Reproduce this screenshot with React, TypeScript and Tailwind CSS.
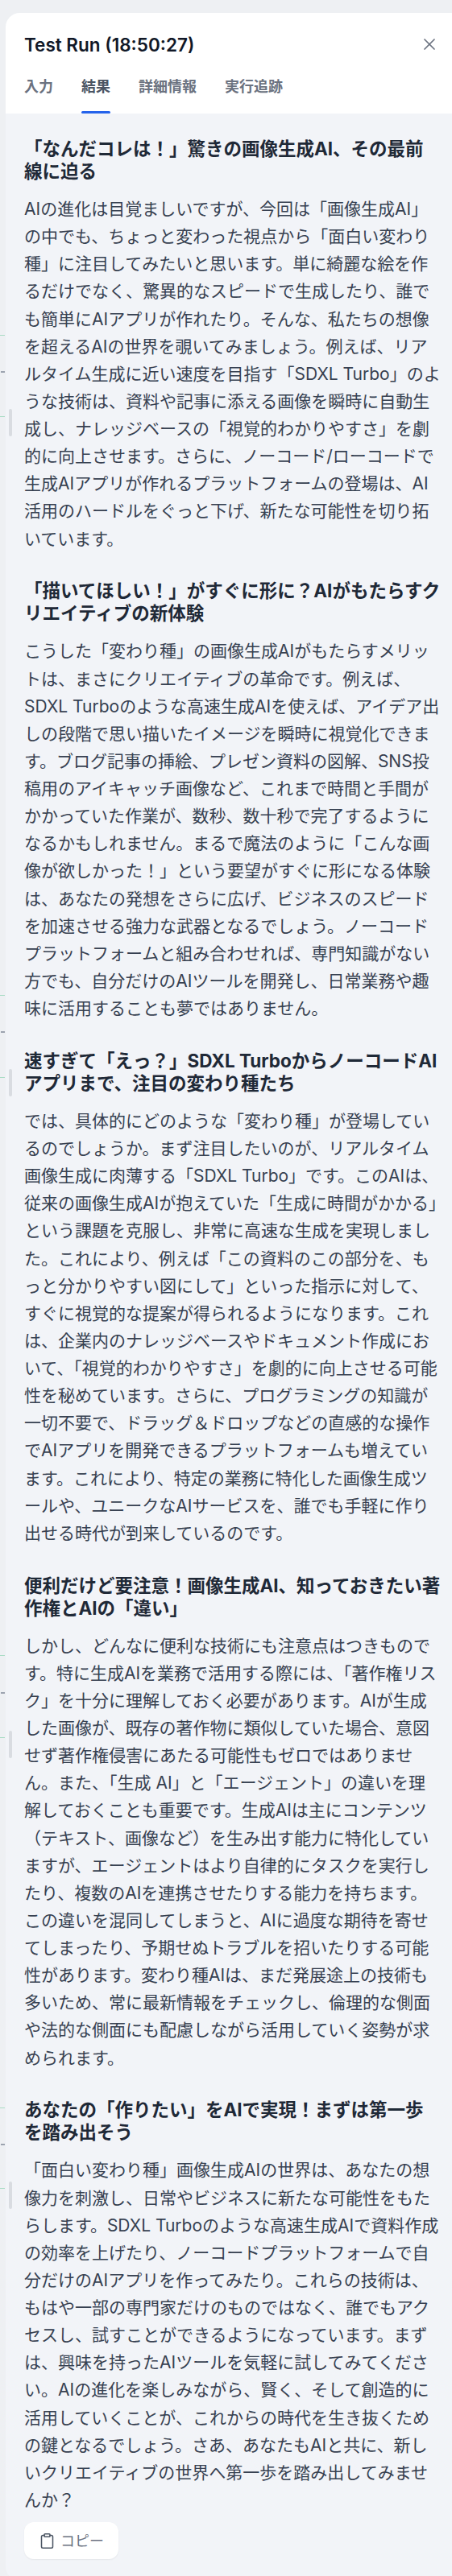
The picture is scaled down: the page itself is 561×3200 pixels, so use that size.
import { Clipboard, X } from 'lucide-react';

const sections = [
  {
    title: ['「なんだコレは！」驚きの画像生成AI、その最前', '線に迫る'],
    lines: [
      'AIの進化は目覚ましいですが、今回は「画像生成AI」',
      'の中でも、ちょっと変わった視点から「面白い変わり',
      '種」に注目してみたいと思います。単に綺麗な絵を作',
      'るだけでなく、驚異的なスピードで生成したり、誰で',
      'も簡単にAIアプリが作れたり。そんな、私たちの想像',
      'を超えるAIの世界を覗いてみましょう。例えば、リア',
      'ルタイム生成に近い速度を目指す「SDXL Turbo」のよ',
      'うな技術は、資料や記事に添える画像を瞬時に自動生',
      '成し、ナレッジベースの「視覚的わかりやすさ」を劇',
      '的に向上させます。さらに、ノーコード/ローコードで',
      '生成AIアプリが作れるプラットフォームの登場は、AI',
      '活用のハードルをぐっと下げ、新たな可能性を切り拓',
      'いています。',
    ],
  },
  {
    title: ['「描いてほしい！」がすぐに形に？AIがもたらすク', 'リエイティブの新体験'],
    lines: [
      'こうした「変わり種」の画像生成AIがもたらすメリッ',
      'トは、まさにクリエイティブの革命です。例えば、',
      'SDXL Turboのような高速生成AIを使えば、アイデア出',
      'しの段階で思い描いたイメージを瞬時に視覚化できま',
      'す。ブログ記事の挿絵、プレゼン資料の図解、SNS投',
      '稿用のアイキャッチ画像など、これまで時間と手間が',
      'かかっていた作業が、数秒、数十秒で完了するように',
      'なるかもしれません。まるで魔法のように「こんな画',
      '像が欲しかった！」という要望がすぐに形になる体験',
      'は、あなたの発想をさらに広げ、ビジネスのスピード',
      'を加速させる強力な武器となるでしょう。ノーコード',
      'プラットフォームと組み合わせれば、専門知識がない',
      '方でも、自分だけのAIツールを開発し、日常業務や趣',
      '味に活用することも夢ではありません。',
    ],
  },
  {
    title: ['速すぎて「えっ？」SDXL TurboからノーコードAI', 'アプリまで、注目の変わり種たち'],
    lines: [
      'では、具体的にどのような「変わり種」が登場してい',
      'るのでしょうか。まず注目したいのが、リアルタイム',
      '画像生成に肉薄する「SDXL Turbo」です。このAIは、',
      '従来の画像生成AIが抱えていた「生成に時間がかかる」',
      'という課題を克服し、非常に高速な生成を実現しまし',
      'た。これにより、例えば「この資料のこの部分を、も',
      'っと分かりやすい図にして」といった指示に対して、',
      'すぐに視覚的な提案が得られるようになります。これ',
      'は、企業内のナレッジベースやドキュメント作成にお',
      'いて、「視覚的わかりやすさ」を劇的に向上させる可能',
      '性を秘めています。さらに、プログラミングの知識が',
      '一切不要で、ドラッグ＆ドロップなどの直感的な操作',
      'でAIアプリを開発できるプラットフォームも増えてい',
      'ます。これにより、特定の業務に特化した画像生成ツ',
      'ールや、ユニークなAIサービスを、誰でも手軽に作り',
      '出せる時代が到来しているのです。',
    ],
  },
  {
    title: ['便利だけど要注意！画像生成AI、知っておきたい著', '作権とAIの「違い」'],
    lines: [
      'しかし、どんなに便利な技術にも注意点はつきもので',
      'す。特に生成AIを業務で活用する際には、「著作権リス',
      'ク」を十分に理解しておく必要があります。AIが生成',
      'した画像が、既存の著作物に類似していた場合、意図',
      'せず著作権侵害にあたる可能性もゼロではありませ',
      'ん。また、「生成 AI」と「エージェント」の違いを理',
      '解しておくことも重要です。生成AIは主にコンテンツ',
      '（テキスト、画像など）を生み出す能力に特化してい',
      'ますが、エージェントはより自律的にタスクを実行し',
      'たり、複数のAIを連携させたりする能力を持ちます。',
      'この違いを混同してしまうと、AIに過度な期待を寄せ',
      'てしまったり、予期せぬトラブルを招いたりする可能',
      '性があります。変わり種AIは、まだ発展途上の技術も',
      '多いため、常に最新情報をチェックし、倫理的な側面',
      'や法的な側面にも配慮しながら活用していく姿勢が求',
      'められます。',
    ],
  },
  {
    title: ['あなたの「作りたい」をAIで実現！まずは第一歩', 'を踏み出そう'],
    lines: [
      '「面白い変わり種」画像生成AIの世界は、あなたの想',
      '像力を刺激し、日常やビジネスに新たな可能性をもた',
      'らします。SDXL Turboのような高速生成AIで資料作成',
      'の効率を上げたり、ノーコードプラットフォームで自',
      '分だけのAIアプリを作ってみたり。これらの技術は、',
      'もはや一部の専門家だけのものではなく、誰でもアク',
      'セスし、試すことができるようになっています。まず',
      'は、興味を持ったAIツールを気軽に試してみてくださ',
      'い。AIの進化を楽しみながら、賢く、そして創造的に',
      '活用していくことが、これからの時代を生き抜くため',
      'の鍵となるでしょう。さあ、あなたもAIと共に、新し',
      'いクリエイティブの世界へ第一歩を踏み出してみませ',
      'んか？',
    ],
  },
];

const tabs = ['入力', '結果', '詳細情報', '実行追跡'];

// bits of the page behind the panel, sticking out at the left edge
const thumbs = [508, 1328, 2150, 2710];
const ticks = [416, 517, 1236, 1338, 2056, 2158, 2618, 2718];
const specks = [461, 1281, 2102, 2663];

export default function App() {
  return (
    <div className="relative h-[3200px] overflow-hidden bg-[#eef0f3] pl-[7px] pt-[16px] font-['Inter','Noto_Sans_CJK_JP',sans-serif]">
      <div className="flex h-[3190px] flex-col overflow-hidden rounded-l-[18px] bg-[#f2f4f8]">
        <div className="h-[125px] shrink-0 bg-white pl-[23px] pr-[16px]">
          <div className="flex h-[78px] items-center justify-between">
            <h1 className="pt-[2px] text-[22.5px] leading-[28px] font-semibold text-[#111827]">Test Run (18:50:27)</h1>
            <X size={24} strokeWidth={1.75} className="text-[#6b7280]" />
          </div>
          <div className="flex gap-[35px]">
            {tabs.map((t) => (
              <div
                key={t}
                className={`relative pt-[2px] pb-[14px] text-[18px] leading-[24px] font-semibold ${t === '結果' ? 'text-[#4b5563]' : 'text-[#6b7280]'}`}
              >
                {t}
                {t === '結果' && <span className="absolute right-0 bottom-[-7px] left-0 h-[3px] rounded-full bg-[#2563eb]" />}
              </div>
            ))}
          </div>
        </div>

        <div className="flex flex-col pl-[23px] pt-[30px]">
          {sections.map((s, i) => (
            <section key={i} className={i === 0 ? '' : 'mt-[33.75px]'}>
              <h2 className="text-[22.5px] leading-[28px] font-bold text-[#1f2937]">
                {s.title.map((l) => (
                  <span key={l} className="block whitespace-nowrap">{l}</span>
                ))}
              </h2>
              <p className="mt-[16px] text-[21px] leading-[34.125px] text-[#374151]">
                {s.lines.map((l) => (
                  <span key={l} className="block whitespace-nowrap">{l}</span>
                ))}
              </p>
            </section>
          ))}
          <div className="mt-[10px]">
            <button className="inline-flex h-[46px] items-center gap-[6px] rounded-[12px] bg-white px-[18px] text-[18px] text-[#6b7280] shadow-[0_1px_2px_rgba(0,0,0,0.06)]">
              <Clipboard size={21} strokeWidth={1.75} className="text-[#4b5563]" />
              コピー
            </button>
          </div>
        </div>
      </div>

      {thumbs.map((y) => (
        <span key={y} className="absolute left-[11px] h-[34px] w-[4px] rounded-full bg-[#d9dce1]" style={{ top: y }} />
      ))}
      {ticks.map((y) => (
        <span key={y} className="absolute left-0 h-[1px] w-[6px] bg-[#a9dcc5]" style={{ top: y }} />
      ))}
      {specks.map((y) => (
        <span key={y} className="absolute left-[1px] h-[2px] w-[5px] bg-[#9ca3af]" style={{ top: y }} />
      ))}
    </div>
  );
}
